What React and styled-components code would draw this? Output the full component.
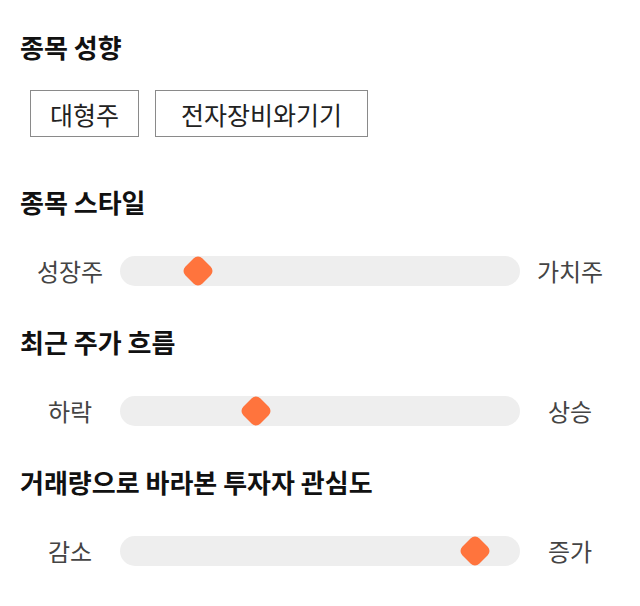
import React from "react";
import styled, { createGlobalStyle } from "styled-components";

const Global = createGlobalStyle`
  html, body { margin: 0; padding: 0; background: #fff; }
  body { font-family: "Noto Sans CJK KR", "Noto Sans", sans-serif; color: #111; }
`;

const Page = styled.div`
  padding: 32px 20px 0;
  width: 600px;
  display: flex;
  flex-direction: column;
`;

const Section = styled.section`
  display: flex;
  flex-direction: column;
  margin-top: ${(p) => p.$gap}px;
`;

const Title = styled.h2`
  margin: 0 0 ${(p) => p.$after}px;
  font-size: 26px;
  line-height: 30px;
  font-weight: 700;
  color: #111;
`;

const Chips = styled.div`
  display: flex;
  gap: 16px;
  padding-left: 10px;
`;

const Chip = styled.button`
  height: 47px;
  padding: 0 ${(p) => p.$pad}px;
  border: 1px solid #8a8a8a;
  background: #fff;
  font-family: inherit;
  font-size: 25px;
  color: #222;
  display: flex;
  align-items: center;
  cursor: pointer;
`;

const SliderRow = styled.div`
  display: grid;
  grid-template-columns: 100px 1fr 100px;
  align-items: center;
  height: 30px;
`;

const Label = styled.span`
  text-align: center;
  font-size: 24px;
  color: #444;
  line-height: 30px;
`;

const Track = styled.div`
  position: relative;
  height: 30px;
  border-radius: 15px;
  background: #eeeeee;
`;

const Thumb = styled.div`
  position: absolute;
  top: 50%;
  width: 24px;
  height: 24px;
  border-radius: 6px;
  background: #ff743d;
  transform: translate(-50%, -50%) rotate(45deg);
`;

const Slider = ({ left, right, pos }) => (
  <SliderRow>
    <Label>{left}</Label>
    <Track>
      <Thumb style={{ left: `${pos}%` }} />
    </Track>
    <Label>{right}</Label>
  </SliderRow>
);

export default function App() {
  return (
    <>
      <Global />
      <Page>
        <Section $gap={0}>
          <Title $after={28}>종목 성향</Title>
          <Chips>
            <Chip $pad={19}>대형주</Chip>
            <Chip $pad={25}>전자장비와기기</Chip>
          </Chips>
        </Section>
        <Section $gap={50}>
          <Title $after={39}>종목 스타일</Title>
          <Slider left="성장주" right="가치주" pos={19.5} />
        </Section>
        <Section $gap={41}>
          <Title $after={39}>최근 주가 흐름</Title>
          <Slider left="하락" right="상승" pos={34} />
        </Section>
        <Section $gap={41}>
          <Title $after={39}>거래량으로 바라본 투자자 관심도</Title>
          <Slider left="감소" right="증가" pos={88.75} />
        </Section>
      </Page>
    </>
  );
}
